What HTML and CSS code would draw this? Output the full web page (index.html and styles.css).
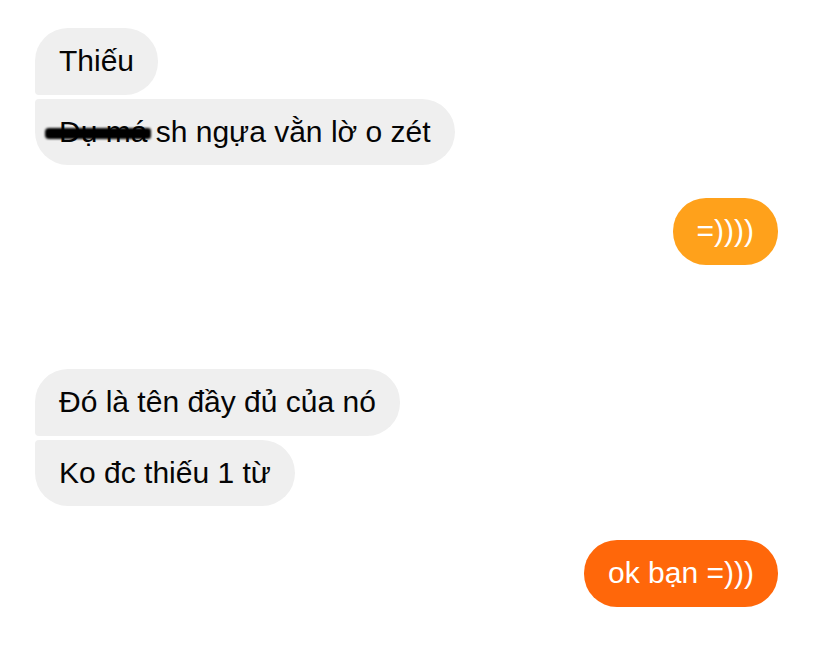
FILE: index.html
```html
<!DOCTYPE html>
<html>
<head>
<meta charset="utf-8">
<link rel="stylesheet" href="styles.css">
</head>
<body>
<div class="chat">
  <div class="group in">
    <div class="bubble first">Thiếu</div>
    <div class="bubble last"><span class="censor-wrap"><span class="censor"></span>Đụ má</span> sh ngựa vằn lờ o zét</div>
  </div>
  <div class="group out gap-s">
    <div class="bubble me yellow">=))))</div>
  </div>
  <div class="group in gap-l">
    <div class="bubble first">Đó là tên đầy đủ của nó</div>
    <div class="bubble last">Ko đc thiếu 1 từ</div>
  </div>
  <div class="group out gap-m">
    <div class="bubble me red">ok bạn =)))</div>
  </div>
</div>
</body>
</html>
```
FILE: styles.css
```css
html, body {
  margin: 0;
  padding: 0;
  background: #ffffff;
}
.chat {
  padding: 28px 46px 0 35px;
  display: flex;
  flex-direction: column;
  font-family: "Liberation Sans", Arial, sans-serif;
}
.group {
  display: flex;
  flex-direction: column;
  gap: 4px;
}
.group.in { align-items: flex-start; }
.group.out { align-items: flex-end; }
.gap-s { margin-top: 33px; }
.gap-m { margin-top: 34px; }
.gap-l { margin-top: 104.5px; }
.bubble {
  font-size: 30px;
  line-height: 34.5px;
  padding: 16px 24px;
  border-radius: 33px;
  background: #efefef;
  color: #050505;
  white-space: nowrap;
}
.bubble.first { border-bottom-left-radius: 4px; }
.bubble.last { border-top-left-radius: 4px; }
.bubble.me { color: #ffffff; }
.yellow { background: #ffa11b; }
.red { background: #ff670a; }
.censor-wrap {
  position: relative;
}
.censor {
  position: absolute;
  left: -14px;
  right: -4px;
  top: 13px;
  height: 11px;
  background: #000;
  border-radius: 4px 3px 3px 4px;
  filter: blur(1.2px);
}
```
